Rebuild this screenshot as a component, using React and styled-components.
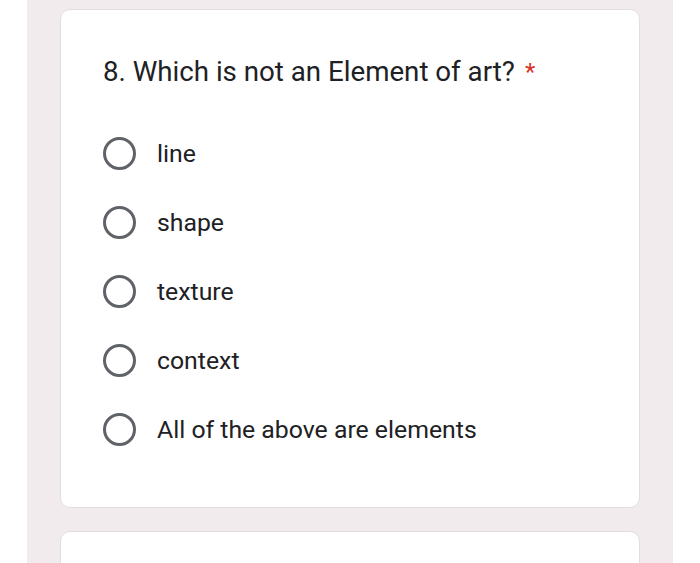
import React from 'react';
import styled, { createGlobalStyle } from 'styled-components';

const GlobalStyle = createGlobalStyle`
  html, body {
    margin: 0;
    padding: 0;
    background: #ffffff;
  }
`;

const Page = styled.div`
  width: 700px;
  height: 563px;
  overflow: hidden;
  background: #ffffff;
  display: flex;
  justify-content: center;
`;

const Band = styled.div`
  width: 646px;
  background: #f2ebee;
  display: flex;
  flex-direction: column;
  align-items: center;
  padding-top: 9px;
  gap: 23px;
  box-sizing: border-box;
`;

const Card = styled.div`
  width: 580px;
  height: ${p => p.height}px;
  flex-shrink: 0;
  background: #ffffff;
  border: 1px solid #e3dde0;
  border-radius: 10px;
  box-sizing: border-box;
  padding: 46px 0 0 42px;
`;

const Question = styled.h2`
  margin: 0 0 49px;
  font-family: Roboto, "Liberation Sans", sans-serif;
  font-weight: 400;
  font-size: 27.7px;
  line-height: 32px;
  color: #202124;
`;

const Star = styled.span`
  color: #d93025;
  font-size: 24px;
  vertical-align: 1px;
  margin-left: 10px;
`;

const Options = styled.div`
  display: flex;
  flex-direction: column;
  gap: 36px;
`;

const Option = styled.label`
  display: flex;
  align-items: center;
  gap: 21px;
  height: 33px;
  font-family: Roboto, "Liberation Sans", sans-serif;
  font-size: 24.8px;
  color: #202124;
`;

const Radio = styled.span`
  width: 33px;
  height: 33px;
  box-sizing: border-box;
  border: 3px solid #5f6368;
  border-radius: 50%;
  flex-shrink: 0;
`;

const options = ['line', 'shape', 'texture', 'context', 'All of the above are elements'];

const App = () => {
  return (
    <>
      <GlobalStyle />
      <Page>
        <Band>
          <Card height={499}>
            <Question>
              8. Which is not an Element of art?<Star>*</Star>
            </Question>
            <Options>
              {options.map(o => (
                <Option key={o}>
                  <Radio />
                  {o}
                </Option>
              ))}
            </Options>
          </Card>
          <Card height={60} />
        </Band>
      </Page>
    </>
  );
};

export default App;
